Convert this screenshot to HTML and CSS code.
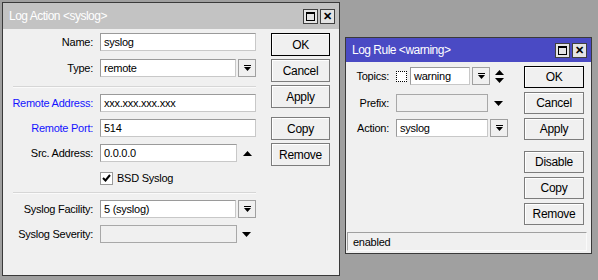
FILE: index.html
```html
<!DOCTYPE html>
<html lang="en">
<head>
    <meta charset="UTF-8">
    <title>Log Action / Log Rule</title>
    <link rel="stylesheet" href="styles.css">
</head>
<body>
    <!-- Cửa sổ Log Action -->
    <div class="window w-action">
        <div class="titlebar inactive">
            <span>Log Action &lt;syslog&gt;</span>
            <div class="tb-buttons">
                <span class="tb-btn"><span class="max-icon"></span></span>
                <span class="tb-btn close">&#x2715;</span>
            </div>
        </div>
        <div class="wbody">
            <div class="form f-action">
                <div class="row r-first">
                    <label>Name:</label>
                    <div class="field full">syslog</div>
                </div>
                <div class="row r-type">
                    <label>Type:</label>
                    <div class="field short">remote</div>
                    <span class="dd"><svg width="7" height="7" viewBox="0 0 7 7"><rect x="0" y="0" width="7" height="1"/><polygon points="0,2 7,2 3.5,6"/></svg></span>
                </div>
                <div class="sep s-1"></div>
                <div class="row r-near">
                    <label class="blue">Remote Address:</label>
                    <div class="field full">xxx.xxx.xxx.xxx</div>
                </div>
                <div class="row">
                    <label class="blue">Remote Port:</label>
                    <div class="field full">514</div>
                </div>
                <div class="row">
                    <label>Src. Address:</label>
                    <div class="field short">0.0.0.0</div>
                    <span class="arrow"><svg width="9" height="5" viewBox="0 0 9 5"><polygon points="0,5 9,5 4.5,0"/></svg></span>
                </div>
                <div class="row">
                    <label></label>
                    <span class="check"><svg width="11" height="11" viewBox="0 0 11 11"><path d="M2 5 L4.5 7.5 L9 2" fill="none" stroke="#000" stroke-width="2"/></svg></span>
                    <span class="check-text">BSD Syslog</span>
                </div>
                <div class="sep s-2"></div>
                <div class="row r-near">
                    <label>Syslog Facility:</label>
                    <div class="field short">5 (syslog)</div>
                    <span class="dd"><svg width="7" height="7" viewBox="0 0 7 7"><rect x="0" y="0" width="7" height="1"/><polygon points="0,2 7,2 3.5,6"/></svg></span>
                </div>
                <div class="row">
                    <label>Syslog Severity:</label>
                    <div class="field short disabled"></div>
                    <span class="arrow down"><svg width="9" height="5" viewBox="0 0 9 5"><polygon points="0,0 9,0 4.5,5"/></svg></span>
                </div>
            </div>
            <div class="buttons b-action">
                <button class="default">OK</button>
                <button>Cancel</button>
                <button>Apply</button>
                <button class="gap">Copy</button>
                <button>Remove</button>
            </div>
        </div>
    </div>

    <!-- Cửa sổ Log Rule -->
    <div class="window w-rule">
        <div class="titlebar active">
            <span>Log Rule &lt;warning&gt;</span>
            <div class="tb-buttons">
                <span class="tb-btn"><span class="max-icon"></span></span>
                <span class="tb-btn close">&#x2715;</span>
            </div>
        </div>
        <div class="wbody">
            <div class="form f-rule">
                <div class="row r-first">
                    <label>Topics:</label>
                    <span class="dotted"></span>
                    <div class="field topic">warning</div>
                    <span class="dd"><svg width="7" height="7" viewBox="0 0 7 7"><rect x="0" y="0" width="7" height="1"/><polygon points="0,2 7,2 3.5,6"/></svg></span>
                    <span class="arrow updown"><svg width="9" height="13" viewBox="0 0 9 13"><polygon points="0,5 9,5 4.5,0"/><polygon points="0,8 9,8 4.5,13"/></svg></span>
                </div>
                <div class="row r-prefix">
                    <label>Prefix:</label>
                    <div class="field mid disabled"></div>
                    <span class="arrow down"><svg width="9" height="5" viewBox="0 0 9 5"><polygon points="0,0 9,0 4.5,5"/></svg></span>
                </div>
                <div class="row">
                    <label>Action:</label>
                    <div class="field mid">syslog</div>
                    <span class="dd"><svg width="7" height="7" viewBox="0 0 7 7"><rect x="0" y="0" width="7" height="1"/><polygon points="0,2 7,2 3.5,6"/></svg></span>
                </div>
            </div>
            <div class="buttons b-rule">
                <button class="default">OK</button>
                <button>Cancel</button>
                <button>Apply</button>
                <button class="gap">Disable</button>
                <button>Copy</button>
                <button>Remove</button>
            </div>
        </div>
        <div class="status">enabled</div>
    </div>
</body>
</html>
```

FILE: styles.css
```css
body {
    margin: 0;
    width: 598px;
    height: 280px;
    background: #a0a0a0;
    font-family: "Liberation Sans", Arial, sans-serif;
    font-size: 11px;
    letter-spacing: -0.25px;
    color: #000;
    position: relative;
    overflow: hidden;
}
.window {
    position: absolute;
    box-sizing: border-box;
    border: 1px solid #3a3a3a;
    background: #f0f0f0;
    display: flex;
    flex-direction: column;
}
.w-action {
    left: 2px;
    top: 2px;
    width: 338px;
    height: 274px;
}
.w-rule {
    left: 345px;
    top: 37px;
    width: 247px;
    height: 217px;
}
.titlebar {
    display: flex;
    align-items: center;
    justify-content: space-between;
    color: #fff;
    padding: 0 4px 0 6px;
    font-size: 12px;
    letter-spacing: -0.5px;
}
.titlebar.inactive {
    background: #c3c3c3;
    height: 26px;
}
.titlebar.active {
    background: #4a4ac4;
    height: 24px;
}
.tb-buttons {
    display: flex;
    gap: 2px;
}
.tb-btn {
    width: 13px;
    height: 13px;
    border: 1px solid #404040;
    background: #e4e4e4;
    display: flex;
    align-items: center;
    justify-content: center;
    color: #000;
}
.tb-btn.close {
    font-size: 11px;
    font-weight: bold;
    letter-spacing: 0;
}
.max-icon {
    width: 7px;
    height: 6px;
    border: 1px solid #000;
    border-top-width: 2px;
}
.wbody {
    display: flex;
    flex: 1;
}
.form {
    display: flex;
    flex-direction: column;
}
.f-action {
    width: 253px;
    padding-top: 4px;
}
.f-rule {
    width: 162px;
    padding-top: 5px;
}
.row {
    display: flex;
    align-items: center;
    height: 18px;
    margin-top: 7px;
}
.row.r-first {
    margin-top: 0;
}
.row.r-type {
    margin-top: 8px;
}
.row.r-near {
    margin-top: 6px;
}
.row.r-prefix {
    margin-top: 9px;
}
.row label {
    text-align: right;
    margin-right: 7px;
    flex-shrink: 0;
}
.f-action label {
    width: 90px;
}
.f-rule label {
    width: 43px;
}
label.blue {
    color: #1414ff;
}
.field {
    box-sizing: border-box;
    height: 18px;
    background: #fff;
    border: 1px solid #9a9a9a;
    border-right-color: #c8c8c8;
    border-bottom-color: #c8c8c8;
    padding: 1px 3px 0;
    line-height: 15px;
    white-space: nowrap;
    overflow: hidden;
}
.field.disabled {
    background: #f0f0f0;
    border-color: #a8a8a8;
}
.field.full {
    width: 156px;
}
.field.short {
    width: 137px;
}
.field.mid {
    width: 92px;
}
.field.topic {
    width: 60px;
}
.dd {
    box-sizing: border-box;
    width: 18px;
    height: 18px;
    margin-left: 2px;
    border: 1px solid #a0a0a0;
    background: #f0f0f0;
    display: flex;
    align-items: center;
    justify-content: center;
}
.arrow {
    display: flex;
    align-items: center;
    margin-left: 6px;
}
.arrow.down {
    margin-left: 5px;
}
.f-rule .arrow.down {
    margin-left: 6px;
}
.arrow.updown {
    margin-left: 5px;
}
.check {
    box-sizing: border-box;
    width: 13px;
    height: 13px;
    margin-left: 0;
    background: #fff;
    border: 1px solid #9a9a9a;
    display: flex;
    align-items: center;
    justify-content: center;
}
.check-text {
    margin-left: 4px;
}
.dotted {
    box-sizing: border-box;
    width: 11px;
    height: 11px;
    border: 1px dotted #000;
    background: #fff;
    margin-right: 3px;
}
.sep {
    margin-left: 10px;
    border-top: 1px solid #d6d6d6;
    border-bottom: 1px solid #fafafa;
}
.sep.s-1 {
    margin-top: 9px;
}
.sep.s-2 {
    margin-top: 5px;
}
.buttons {
    display: flex;
    flex-direction: column;
}
.b-action {
    margin-left: 15px;
    padding-top: 4px;
    gap: 3px;
}
.b-rule {
    margin-left: 16px;
    padding-top: 4px;
    gap: 4px;
}
.buttons button {
    box-sizing: border-box;
    font-family: "Liberation Sans", Arial, sans-serif;
    font-size: 12px;
    letter-spacing: -0.3px;
    background: #f0f0f0;
    color: #000;
    border: 1px solid #7c7c7c;
    box-shadow: inset 1px 1px 0 #fff;
    padding: 0;
}
.b-action button {
    width: 59px;
    height: 23px;
}
.b-rule button {
    width: 60px;
    height: 22px;
}
.buttons button.default {
    border-color: #000;
}
.b-action button.gap {
    margin-top: 6px;
}
.b-rule button.gap {
    margin-top: 7px;
}
.status {
    margin: 0 4px 2px 1px;
    height: 19px;
    box-sizing: border-box;
    border-top: 1px solid #a0a0a0;
    border-left: 1px solid #a0a0a0;
    border-bottom: 1px solid #fafafa;
    border-right: 1px solid #fafafa;
    padding: 2px 0 0 5px;
    line-height: 14px;
}
```
